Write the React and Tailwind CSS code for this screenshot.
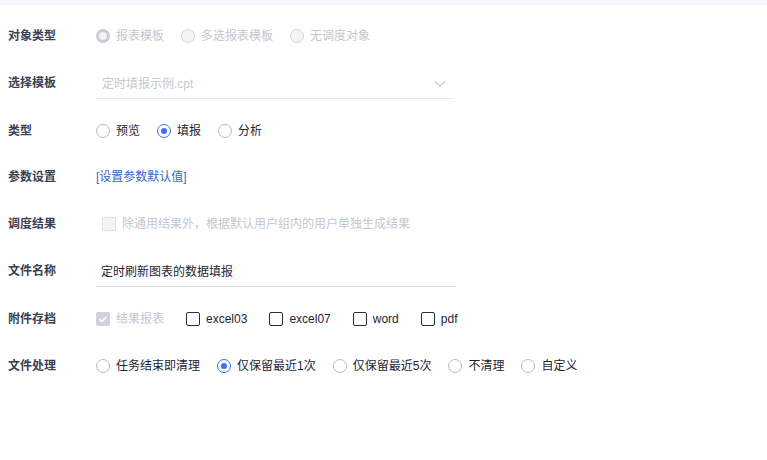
import React from "react";

const FONT = { fontFamily: '"Liberation Sans", "Noto Sans CJK SC", sans-serif' };

function Radio({ checked, disabled, label }) {
  return (
    <div className="flex items-center gap-[6px]">
      <span
        className={
          "w-[14px] h-[14px] rounded-full border flex items-center justify-center box-border " +
          (disabled
            ? checked
              ? "border-[#c9ccd4] bg-[#f0f1f4] border-[3px]"
              : "border-[#d5d8df] bg-[#f3f4f7]"
            : checked
            ? "border-[#3d6ef5] bg-white"
            : "border-[#b5bac8] bg-white")
        }
      >
        {checked && !disabled && <span className="w-[6px] h-[6px] rounded-full bg-[#3d6ef5]" />}
      </span>
      <span className={disabled ? "text-[#c4c7cf]" : "text-[#1f2333]"}>{label}</span>
    </div>
  );
}

function Checkbox({ checked, disabled, label }) {
  return (
    <div className="flex items-center gap-[6px]">
      <span
        className={
          "w-[14px] h-[14px] rounded-[2px] border box-border flex items-center justify-center " +
          (disabled
            ? checked
              ? "bg-[#cfd2d9] border-[#cfd2d9]"
              : "bg-[#f3f4f7] border-[#dcdfe5]"
            : "bg-white border-[#2a2f3d]")
        }
      >
        {checked && (
          <svg width="10" height="10" viewBox="0 0 10 10" fill="none">
            <path d="M1.5 5.2 L4 7.5 L8.5 2.5" stroke="white" strokeWidth="1.6" />
          </svg>
        )}
      </span>
      <span className={disabled ? "text-[#c4c7cf]" : "text-[#1f2333]"}>{label}</span>
    </div>
  );
}

function Row({ label, children, h = "h-[47px]" }) {
  return (
    <div className={"flex items-center " + h}>
      <div className="w-[96px] pl-[8px] font-semibold text-[#3a4050]">{label}</div>
      <div className="flex-1 flex items-center">{children}</div>
    </div>
  );
}

export default function App() {
  return (
    <div className="w-[767px] h-[460px] bg-white text-[12px] overflow-hidden" style={FONT}>
      <div className="h-[5px] bg-[#f6f7fb]" />
      <div className="pt-[7px]">
        <Row label="对象类型">
          <div className="flex items-center gap-[17px]">
            <Radio checked disabled label="报表模板" />
            <Radio disabled label="多选报表模板" />
            <Radio disabled label="无调度对象" />
          </div>
        </Row>
        <Row label="选择模板" h="h-[48px]">
          <div className="w-[358px] h-[30px] border-b border-[#e8e9ed] flex items-center justify-between pl-[6px] pr-[8px] mt-[2px]">
            <span className="text-[#c4c7cf]">定时填报示例.cpt</span>
            <svg width="12" height="8" viewBox="0 0 12 8" fill="none">
              <path d="M1 1.5 L6 6 L11 1.5" stroke="#c9ccd4" strokeWidth="1.3" />
            </svg>
          </div>
        </Row>
        <Row label="类型" h="h-[47px]">
          <div className="flex items-center gap-[17px]">
            <Radio label="预览" />
            <Radio checked label="填报" />
            <Radio label="分析" />
          </div>
        </Row>
        <Row label="参数设置" h="h-[46px]">
          <span className="text-[#3a63c9]">[设置参数默认值]</span>
        </Row>
        <Row label="调度结果" h="h-[47px]">
          <div className="pl-[6px]">
            <Checkbox disabled label="除通用结果外，根据默认用户组内的用户单独生成结果" />
          </div>
        </Row>
        <Row label="文件名称" h="h-[48px]">
          <div className="w-[360px] h-[30px] border-b border-[#dcdee4] flex items-center pl-[5px] mt-[2px]">
            <span className="text-[#1f2333]">定时刷新图表的数据填报</span>
          </div>
        </Row>
        <Row label="附件存档" h="h-[47px]">
          <div className="flex items-center gap-[22px]">
            <Checkbox checked disabled label="结果报表" />
            <Checkbox label="excel03" />
            <Checkbox label="excel07" />
            <Checkbox label="word" />
            <Checkbox label="pdf" />
          </div>
        </Row>
        <Row label="文件处理" h="h-[47px]">
          <div className="flex items-center gap-[17px]">
            <Radio label="任务结束即清理" />
            <Radio checked label="仅保留最近1次" />
            <Radio label="仅保留最近5次" />
            <Radio label="不清理" />
            <Radio label="自定义" />
          </div>
        </Row>
      </div>
    </div>
  );
}
